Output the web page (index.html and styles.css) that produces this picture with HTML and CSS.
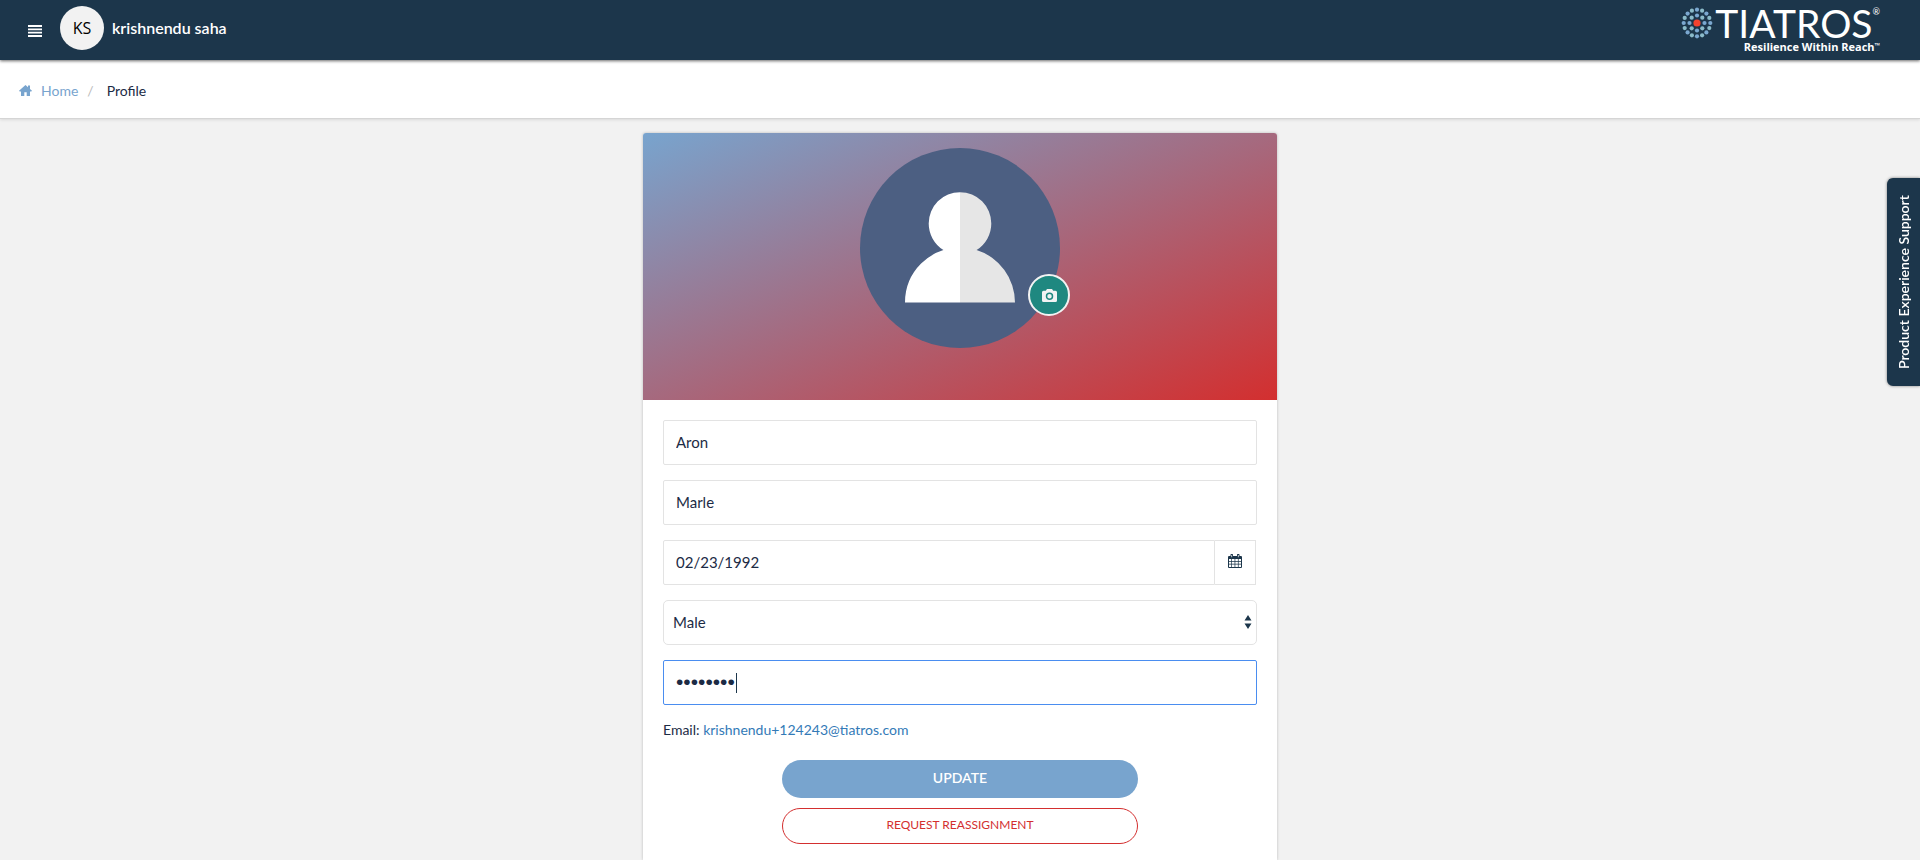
FILE: index.html
```html
<!DOCTYPE html>
<html lang="en">
<head>
<meta charset="utf-8">
<title>Profile</title>
<link rel="stylesheet" href="styles.css">
</head>
<body>
<header class="topbar">
  <div class="account">
    <button class="menu-button" type="button" aria-label="Menu">
      <svg width="14" height="12" viewBox="0 0 14 12" fill="#fff"><path d="M0 0h14v1.900H0zM0 3.400h14v1.900H0zM0 6.700h14v1.900H0zM0 10.100h14V12H0z"/></svg>
    </button>
    <span class="initials">KS</span>
    <span class="account-name">krishnendu saha</span>
  </div>
  <div class="brand">
    <svg class="brand-mark" width="32" height="32" viewBox="-16 -16 32 32">
      <circle r="3.6" fill="#f4432f"/>
      <g fill="#7ba8d0">
        <circle cy="-7.5" r="2.1"/><circle cx="7.5" r="2.1"/><circle cy="7.5" r="2.1"/><circle cx="-7.5" r="2.1"/>
        <circle cy="-13.3" r="2.1"/><circle cx="9.4" cy="-9.4" r="2.1"/><circle cx="13.3" r="2.1"/><circle cx="9.4" cy="9.4" r="2.1"/>
        <circle cy="13.3" r="2.1"/><circle cx="-9.4" cy="9.4" r="2.1"/><circle cx="-13.3" r="2.1"/><circle cx="-9.4" cy="-9.4" r="2.1"/>
      </g>
      <g fill="#8bbbc9">
        <circle cx="5.3" cy="-5.3" r="2.1"/><circle cx="5.3" cy="5.3" r="2.1"/><circle cx="-5.3" cy="5.3" r="2.1"/><circle cx="-5.3" cy="-5.3" r="2.1"/>
        <circle cx="5.1" cy="-12.3" r="2.1"/><circle cx="12.3" cy="-5.1" r="2.1"/><circle cx="12.3" cy="5.1" r="2.1"/><circle cx="5.1" cy="12.3" r="2.1"/>
        <circle cx="-5.1" cy="12.3" r="2.1"/><circle cx="-12.3" cy="5.1" r="2.1"/><circle cx="-12.3" cy="-5.1" r="2.1"/><circle cx="-5.1" cy="-12.3" r="2.1"/>
      </g>
    </svg>
    <div class="brand-text">
      <div class="brand-name">TIATROS<span class="registered">®</span></div>
      <div class="brand-tagline">Resilience Within Reach<span class="trademark">™</span></div>
    </div>
  </div>
</header>
<nav class="breadcrumb" aria-label="Breadcrumb">
  <svg width="13" height="11" viewBox="0 0 13 11" fill="#78a4ce"><path d="M6.500 0 9 2.200V.6h2v3.300l2 1.900-.7.700H11V11H7.700V7.300H5.300V11H2V6.500H.7L0 5.800z"/></svg>
  <a class="crumb-link" href="#">Home</a>
  <span class="crumb-divider">/</span>
  <span class="crumb-current">Profile</span>
</nav>
<main class="page">
  <section class="card">
    <div class="banner">
      <div class="avatar">
        <svg class="avatar-image" viewBox="0 0 200 200">
          <defs>
            <clipPath id="bust"><circle cx="100" cy="75.500" r="31.300"/><path d="M45 154.500a55 55 0 0 1 110 0z"/></clipPath>
          </defs>
          <circle cx="100" cy="100" r="100" fill="#4c5f82"/>
          <g clip-path="url(#bust)">
            <path fill="#fff" d="M40 40h60v115H40z"/>
            <path fill="#e6e6e6" d="M100 40h60v115h-60z"/>
          </g>
        </svg>
        <button class="camera-button" type="button" aria-label="Change photo">
          <svg width="15" height="13" viewBox="0 0 15 13"><path fill="#f3f3f3" d="M5 0h5l1.200 1.700H13.500A1.500 1.500 0 0 1 15 3.200v8.300A1.500 1.500 0 0 1 13.500 13h-12A1.500 1.500 0 0 1 0 11.500V3.200A1.500 1.500 0 0 1 1.500 1.700H3.800z"/><circle cx="7.500" cy="7.300" r="3" fill="none" stroke="#1f8880" stroke-width="1.500"/></svg>
        </button>
      </div>
    </div>
    <form class="profile-form">
      <input class="field" type="text" value="Aron" aria-label="First name">
      <input class="field" type="text" value="Marle" aria-label="Last name">
      <div class="date-group">
        <input class="field date-field" type="text" value="02/23/1992" aria-label="Date of birth">
        <button class="calendar-button" type="button" aria-label="Open calendar">
          <svg width="14" height="14" viewBox="0 0 14 14"><path fill="#1c364b" fill-rule="evenodd" d="M1 2h1.500V1a1 1 0 0 1 2.500 0v1h4V1a1 1 0 0 1 2.500 0v1H13a1 1 0 0 1 1 1v10a1 1 0 0 1-1 1H1a1 1 0 0 1-1-1V3a1 1 0 0 1 1-1zM1 5v2h2.300V5zm3 0v2h2.600V5zm3.300 0v2h2.600V5zm3.300 0v2H13V5zM1 7.700v2h2.300v-2zm3 0v2h2.600v-2zm3.300 0v2h2.600v-2zm3.300 0v2H13v-2zM1 10.500V13h2.300v-2.500zm3 0V13h2.600v-2.500zm3.300 0V13h2.600v-2.500zm3.300 0V13H13v-2.500zM3.400 1v2.300h.7V1zm6.500 0v2.300h.7V1z"/></svg>
        </button>
      </div>
      <div class="select-group">
        <select class="field select-field" aria-label="Gender"><option>Male</option><option>Female</option></select>
        <svg class="select-arrows" width="8" height="14" viewBox="0 0 8 14" fill="#1c364b"><path d="M4 0l3.500 5.500h-7zM4 14L.5 8.500h7z"/></svg>
      </div>
      <div class="password-group">
        <input class="field password-field" type="password" value="password" aria-label="Password">
        <span class="caret"></span>
      </div>
      <p class="email">Email: <a class="email-link" href="#">krishnendu+124243@tiatros.com</a></p>
      <div class="actions">
        <button class="update-button" type="submit">UPDATE</button>
        <button class="reassign-button" type="button">REQUEST REASSIGNMENT</button>
      </div>
    </form>
  </section>
</main>
<button class="support-tab" type="button">Product Experience Support</button>
</body>
</html>
```
FILE: styles.css
```css
* { box-sizing: border-box; }
body {
  margin: 0;
  min-height: 100vh;
  display: flex;
  flex-direction: column;
  background: #f2f2f2;
  color: #1c2b45;
  font: 14px/20px Lato, "Open Sans", sans-serif;
}
button, input, select { font: inherit; color: inherit; }
button { cursor: pointer; }
a { text-decoration: none; }
svg { display: block; }

.topbar {
  position: relative;
  display: flex;
  justify-content: space-between;
  height: 60px;
  padding: 0 40px 0 28px;
  background: #1c364b;
  color: #fff;
  box-shadow: 0 1px 3px rgba(0, 0, 0, .6);
}
.account { display: flex; align-items: center; padding-bottom: 4px; }
.menu-button { margin: 6px 18px 0 0; padding: 0; border: 0; background: none; }
.initials {
  width: 44px;
  height: 44px;
  margin-right: 8px;
  border-radius: 50%;
  background: #f2f2f2;
  color: #000;
  font-family: "Open Sans", sans-serif;
  font-size: 16px;
  line-height: 44px;
  text-align: center;
}
.account-name { font-size: 16px; font-weight: 600; }
.brand { display: flex; gap: 2px; }
.brand-mark { margin-top: 7px; }
.brand-name { display: flex; justify-content: flex-end; font-size: 39px; line-height: 38px; padding-top: 4px; }
.registered { font-size: 9px; line-height: 16px; }
.brand-tagline { display: flex; justify-content: flex-end; font-family: "Open Sans", sans-serif; font-size: 11px; font-weight: 700; line-height: 10px; }
.trademark { font-size: 7px; line-height: 8px; }

.breadcrumb {
  display: flex;
  align-items: center;
  height: 59px;
  padding: 3px 19px 0;
  border-bottom: 1px solid #d5d5d5;
  background: #fff;
  box-shadow: 0 1px 3px rgba(0, 0, 0, .1);
}
.crumb-link { margin-left: 9px; color: #78a4ce; }
.crumb-divider { margin: 0 13px 0 9px; color: #bbb; }

.page {
  flex: 1;
  display: flex;
  justify-content: center;
  padding: 14px 16px 0;
}
.card {
  width: 100%;
  max-width: 634px;
  border-radius: 3px 3px 0 0;
  background: #fff;
  box-shadow: 0 0 3px rgba(0, 0, 0, .25);
}
.banner {
  height: 267px;
  padding-top: 15px;
  border-radius: 3px 3px 0 0;
  background: linear-gradient(to bottom right, #78a4ce, #d32f2f);
}
.avatar { position: relative; width: 200px; margin: 0 auto; }
.camera-button {
  position: absolute;
  right: -10px;
  bottom: 32px;
  display: grid;
  place-items: center;
  width: 42px;
  height: 42px;
  padding: 0;
  border: 2px solid #f3f3f3;
  border-radius: 50%;
  background: #1f8880;
}

.profile-form {
  display: flex;
  flex-direction: column;
  gap: 15px;
  padding: 20px 20px 12px;
}
.field {
  display: block;
  width: 100%;
  height: 45px;
  padding: 0 12px 2px;
  border: 1px solid #e3e3e3;
  border-radius: 2px;
  background: #fff;
  font-size: 15px;
  outline: 0;
}
.date-group { display: flex; padding-right: 1px; }
.date-field { flex: 1; border-radius: 2px 0 0 2px; }
.calendar-button {
  display: grid;
  place-items: center;
  width: 41px;
  padding: 0 0 4px;
  border: 1px solid #e3e3e3;
  border-left: 0;
  background: #fff;
}
.select-group, .password-group { position: relative; }
.select-field { padding: 0 9px 2px; border-radius: 5px; appearance: none; }
.select-arrows { position: absolute; right: 5px; top: 15px; pointer-events: none; }
.password-field { border-color: #4a8df0; font-family: "Liberation Sans", sans-serif; font-size: 21px; }
.caret { position: absolute; left: 73px; top: 13px; width: 1px; height: 20px; background: #1c364b; }
.email { margin: 0; line-height: 19px; }
.email-link { color: #337ab7; }
.actions {
  display: flex;
  flex-direction: column;
  gap: 10px;
  width: 60%;
  margin: 6px auto 0;
}
.update-button, .reassign-button { padding: 0 0 2px; border-radius: 19px; }
.update-button { height: 38px; border: 0; background: #78a4ce; color: #fff; font-weight: 600; }
.reassign-button { height: 36px; border: 1px solid #d32f2f; background: #fff; color: #d32f2f; font-size: 12px; }

.support-tab {
  position: fixed;
  right: 0;
  top: 178px;
  width: 33px;
  height: 208px;
  padding: 0;
  border: 0;
  border-radius: 0 6px 6px 0;
  background: #1c364b;
  color: #fff;
  font-weight: 600;
  line-height: 33px;
  writing-mode: vertical-rl;
  transform: rotate(180deg);
  box-shadow: 0 0 3px rgba(0, 0, 0, .5);
}
```
